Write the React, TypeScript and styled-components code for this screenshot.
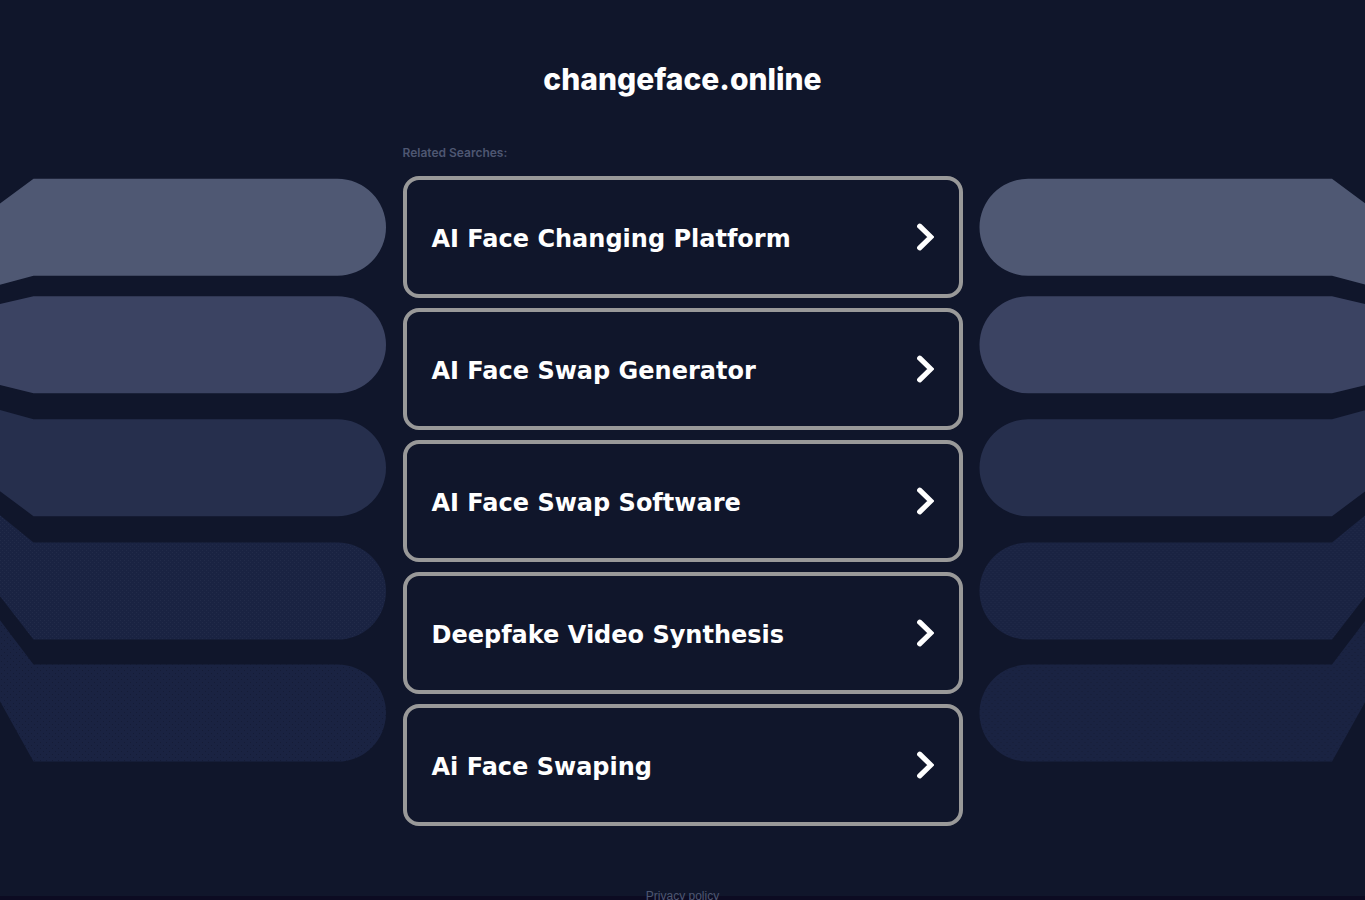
import React from "react";
import styled, { createGlobalStyle } from "styled-components";

const GlobalStyle = createGlobalStyle`
  * { box-sizing: border-box; }
  body { margin: 0; background: #0c0b22; }
`;

const Page = styled.div`
  display: grid;
  grid-template-columns: minmax(0, 1fr) minmax(0, 560px) minmax(0, 1fr);
  column-gap: 17px;
  overflow: hidden;
  background: linear-gradient(#10162b, #10162b) no-repeat 0 0 / 100% 896px;
`;

const Side = styled.div<{ $mirrored?: boolean }>`
  display: flex;
  justify-content: flex-end;
  transform: ${(p) => (p.$mirrored ? "scaleX(-1)" : "none")};
`;

const Beams = styled.svg`
  flex: none;
  overflow: visible;
`;

const Main = styled.main`
  display: flex;
  flex-direction: column;
`;

const Title = styled.h1`
  margin: 0;
  padding-top: 60px;
  font: 800 30px/38px Inter, "Open Sans", sans-serif;
  color: #fff;
  text-align: center;
`;

const Related = styled.h2`
  margin: 0;
  padding: 46px 0 15px;
  font: 600 12px/17px Inter, "Open Sans", sans-serif;
  color: #4e5772;
`;

const List = styled.ul`
  display: flex;
  flex-direction: column;
  gap: 10px;
  margin: 0;
  padding: 0;
  list-style: none;
`;

const Card = styled.a`
  display: flex;
  align-items: center;
  justify-content: space-between;
  min-height: 122px;
  padding: 0 25px;
  border: 4px solid #999;
  border-radius: 16px;
  font: 700 24px/32px Verdana, "DejaVu Sans", sans-serif;
  color: #fff;
  text-decoration: none;
`;

const CardLabel = styled.span`
  padding-top: 4px;
`;

const Chevron = styled.svg`
  flex: none;
`;

const Footer = styled.footer`
  padding: 62px 0 24px;
  font: 400 12px/16px "Liberation Sans", Arial, sans-serif;
  text-align: center;
`;

const FooterLink = styled.a`
  color: #4e5772;
  text-decoration: none;
`;

const searches = [
  "AI Face Changing Platform",
  "AI Face Swap Generator",
  "AI Face Swap Software",
  "Deepfake Video Synthesis",
  "Ai Face Swaping",
];

/* Each beam tapers off from a rounded bar to a point outside the left edge. */
const beams = [
  { top: 178.7, tipY: 330, fill: "#4f5873" },
  { top: 296.2, tipY: 344, fill: "#3b4362" },
  { top: 419.2, tipY: 364, fill: "#262f4d" },
  { top: 542.6, tipY: 376, fill: "url(#grain-light)" },
  { top: 664.6, tipY: 395, fill: "url(#grain-dark)" },
];

function BeamArt() {
  return (
    <Beams width="386" height="896" viewBox="0 0 386 896" aria-hidden="true">
      <defs>
        <pattern id="grain-light" width="4" height="4" patternUnits="userSpaceOnUse">
          <rect width="4" height="4" fill="#1a2342" />
          <path d="M0 0h1v1H0zM2 2h1v1H2z" fill="#222b49" />
        </pattern>
        <pattern id="grain-dark" width="6" height="6" patternUnits="userSpaceOnUse">
          <rect width="6" height="6" fill="#1a2342" />
          <path d="M1 1h1v1H1zM4 4h1v1H4z" fill="#151c36" />
        </pattern>
      </defs>
      {beams.map((b) => (
        <path
          key={b.top}
          fill={b.fill}
          d={`M-170 ${b.tipY}L33.5 ${b.top}H337.5a48.5 48.5 0 0 1 0 97H33.5Z`}
        />
      ))}
    </Beams>
  );
}

export default function App() {
  return (
    <>
      <GlobalStyle />
      <Page>
        <Side>
          <BeamArt />
        </Side>
        <Main>
          <Title>changeface.online</Title>
          <Related>Related Searches:</Related>
          <List>
            {searches.map((text) => (
              <li key={text}>
                <Card href="#">
                  <CardLabel>{text}</CardLabel>
                  <Chevron width="17" height="28" viewBox="0 0 17 28" aria-hidden="true">
                    <path
                      d="M2.7 3.2L13.8 14L2.7 24.8"
                      fill="none"
                      stroke="#fff"
                      strokeWidth="5.2"
                      strokeLinecap="round"
                    />
                  </Chevron>
                </Card>
              </li>
            ))}
          </List>
          <Footer>
            <FooterLink href="#">Privacy policy</FooterLink>
          </Footer>
        </Main>
        <Side $mirrored>
          <BeamArt />
        </Side>
      </Page>
    </>
  );
}
